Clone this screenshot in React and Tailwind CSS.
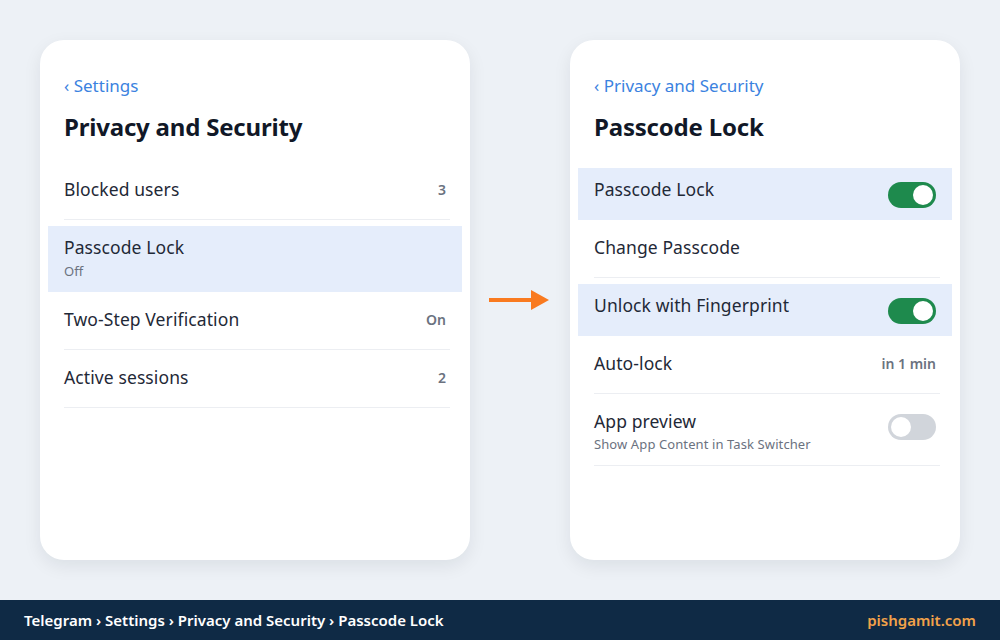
const font = { fontFamily: '"Noto Sans", "Open Sans", sans-serif' };

function Toggle({ on }) {
  return (
    <div
      className={
        "mt-3 flex h-[26px] w-12 shrink-0 items-center rounded-full px-[3px] " +
        (on ? "justify-end bg-[#1e8a4d]" : "justify-start bg-[#d1d5db]")
      }
    >
      <div className="h-5 w-5 rounded-full bg-white" />
    </div>
  );
}

function Row({ title, sub, value, toggle, active }) {
  if (active) {
    return (
      <div className="pt-[6px]">
        <div
          className={
            "-ml-4 -mr-3 flex items-start justify-between bg-[#e5edfb] pl-4 pr-4 pt-[9px] " +
            (sub ? "h-[66px]" : "h-[52px]")
          }
        >
          <div>
            <div className="text-[17.5px] leading-6 tracking-[0.1px] text-[#1f2937]">{title}</div>
            {sub && <div className="mt-[2px] text-[13px] leading-5 text-[#6b7280]">{sub}</div>}
          </div>
          {toggle !== undefined && <div className="-mt-[7px]"><Toggle on={toggle} /></div>}
          {value && <div className="pt-[2px] text-sm font-semibold text-[#6b7280]">{value}</div>}
        </div>
      </div>
    );
  }
  return (
    <div className={"flex items-start justify-between border-b border-[#eceef2] pt-[15px] " + (sub ? "h-[72px]" : "h-[58px]")}>
      <div>
        <div className="text-[17.5px] leading-6 tracking-[0.1px] text-[#1f2937]">{title}</div>
        {sub && <div className="mt-[1px] text-[13px] leading-5 tracking-[0.1px] text-[#6b7280]">{sub}</div>}
      </div>
      {toggle !== undefined && <div className="-mt-[7px] pr-1"><Toggle on={toggle} /></div>}
      {value && <div className="pt-[3px] pr-1 text-sm font-semibold text-[#6b7280]">{value}</div>}
    </div>
  );
}

function Card({ back, title, width, children }) {
  return (
    <div
      className="h-[520px] shrink-0 rounded-[24px] bg-white pl-6 pr-5 pt-[34px] shadow-[0_6px_18px_rgba(15,23,42,0.08)]"
      style={{ width }}
    >
      <div className="text-[17px] leading-6 text-[#3b82e0]">‹ {back}</div>
      <div className="mt-[13px] text-[24px] font-bold leading-8 tracking-[-0.2px] text-[#111827]">{title}</div>
      <div className="mt-[19px]">{children}</div>
    </div>
  );
}

export default function App() {
  return (
    <div className="flex h-[640px] w-[1000px] flex-col bg-[#edf1f6]" style={font}>
      <div className="flex flex-1 items-start pl-10 pt-10">
        <Card back="Settings" title="Privacy and Security" width={430}>
          <Row title="Blocked users" value="3" />
          <Row title="Passcode Lock" sub="Off" active />
          <Row title="Two-Step Verification" value="On" />
          <Row title="Active sessions" value="2" />
        </Card>
        <div className="flex w-[100px] justify-center pt-[250px]">
          <svg width="62" height="20" viewBox="0 0 62 20">
            <rect x="0" y="8" width="46" height="4" fill="#f97a1f" />
            <polygon points="42,0 60,10 42,20" fill="#f97a1f" />
          </svg>
        </div>
        <Card back="Privacy and Security" title="Passcode Lock" width={390}>
          <Row title="Passcode Lock" toggle={true} active />
          <Row title="Change Passcode" />
          <Row title="Unlock with Fingerprint" toggle={true} active />
          <Row title="Auto-lock" value="in 1 min" />
          <Row title="App preview" sub="Show App Content in Task Switcher" toggle={false} />
        </Card>
      </div>
      <div className="flex h-10 items-center justify-between bg-[#0f2a45] px-6">
        <div className="text-[15px] font-semibold text-white">
          Telegram › Settings › Privacy and Security › Passcode Lock
        </div>
        <div className="text-[15px] font-semibold text-[#f2a24a]">pishgamit.com</div>
      </div>
    </div>
  );
}
